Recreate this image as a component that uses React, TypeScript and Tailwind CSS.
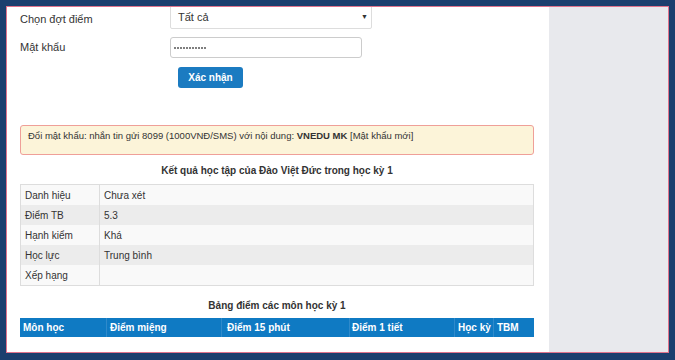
import React from "react";

const font = { fontFamily: '"Liberation Sans", Arial, sans-serif' };

export default function App() {
  const rows: [string, string][] = [
    ["Danh hiệu", "Chưa xét"],
    ["Điểm TB", "5.3"],
    ["Hạnh kiểm", "Khá"],
    ["Học lực", "Trung bình"],
    ["Xếp hạng", ""],
  ];
  const dots = Array.from({ length: 11 });
  return (
    <div className="w-[675px] h-[360px] bg-[#1b3f6e] pt-[6px] pl-[6px] pr-[6px] pb-[7px]" style={font}>
      <div className="w-full h-full border border-[#e0738c] flex overflow-hidden">
        <div className="w-[542px] h-full bg-white overflow-hidden pl-[13px] pr-[7px] text-[#333]">
          <div className="flex items-center mt-[-2px] h-[24px]">
            <div className="w-[150px] text-[11px] pt-[5px]">Chọn đợt điểm</div>
            <div className="w-[202px] h-[24px] border border-[#ddd] rounded-[2px] flex items-center justify-between pl-[7px] pr-[3px] text-[11px]">
              <span>Tất cả</span>
              <span className="text-[7px] text-[#333]">▼</span>
            </div>
          </div>
          <div className="flex items-center mt-[8px] h-[21px]">
            <div className="w-[150px] text-[11px]">Mật khẩu</div>
            <div className="w-[192px] h-[21px] border border-[#ccc] rounded-[3px] flex items-center pl-[3px] gap-[1px]">
              {dots.map((_, i) => (
                <div key={i} className="w-[2px] h-[2px] rounded-full bg-[#555]" />
              ))}
            </div>
          </div>
          <div className="pl-[158px] mt-[9px]">
            <div className="w-[65px] h-[21px] rounded-[3px] bg-[#1b7bc1] text-white text-[10px] font-bold flex items-center justify-center">
              Xác nhận
            </div>
          </div>
          <div className="mt-[37px] w-[514px] h-[30px] bg-[#fcf4d9] border border-[#ef9f98] rounded-[3px] pl-[7px] pt-[3px] text-[9.5px] text-[#333]">
            <span>
              Đổi mật khẩu: nhắn tin gửi 8099 (1000VNĐ/SMS) với nội dung: <b>VNEDU MK</b> [Mật khẩu mới]
            </span>
          </div>
          <div className="w-[514px] text-center font-bold text-[10px] mt-[9px] h-[14px] leading-[14px] text-[#333]">
            Kết quả học tập của Đào Việt Đức trong học kỳ 1
          </div>
          <div className="w-[514px] mt-[6px] border border-[#ddd]">
            {rows.map(([a, b], i) => (
              <div
                key={a}
                className={`flex h-[20px] items-center text-[10px] ${i % 2 === 1 ? "bg-[#ececec]" : "bg-[#f9f9f9]"}`}
              >
                <div className="w-[79px] h-full border-r border-[#ddd] pl-[4px] flex items-center">{a}</div>
                <div className="pl-[4px]">{b}</div>
              </div>
            ))}
          </div>
          <div className="w-[514px] text-center font-bold text-[10px] mt-[13px] h-[14px] leading-[14px] text-[#333]">
            Bảng điểm các môn học kỳ 1
          </div>
          <div className="w-[514px] mt-[5px] h-[19px] bg-[#0f7ac3] flex text-white font-bold text-[10px]">
            <div className="w-[87px] border-r border-[#2f8acb] pl-[3px] flex items-center">Môn học</div>
            <div className="w-[115px] border-r border-[#2f8acb] pl-[3px] flex items-center">Điểm miệng</div>
            <div className="w-[128px] border-r border-[#2f8acb] pl-[5px] flex items-center">Điểm 15 phút</div>
            <div className="w-[105px] border-r border-[#2f8acb] pl-[2px] flex items-center">Điểm 1 tiết</div>
            <div className="w-[39px] border-r border-[#2f8acb] pl-[3px] flex items-center">Học kỳ</div>
            <div className="flex-1 pl-[3px] flex items-center">TBM</div>
          </div>
        </div>
        <div className="flex-1 h-full bg-[#e8e9ed]" />
      </div>
    </div>
  );
}
